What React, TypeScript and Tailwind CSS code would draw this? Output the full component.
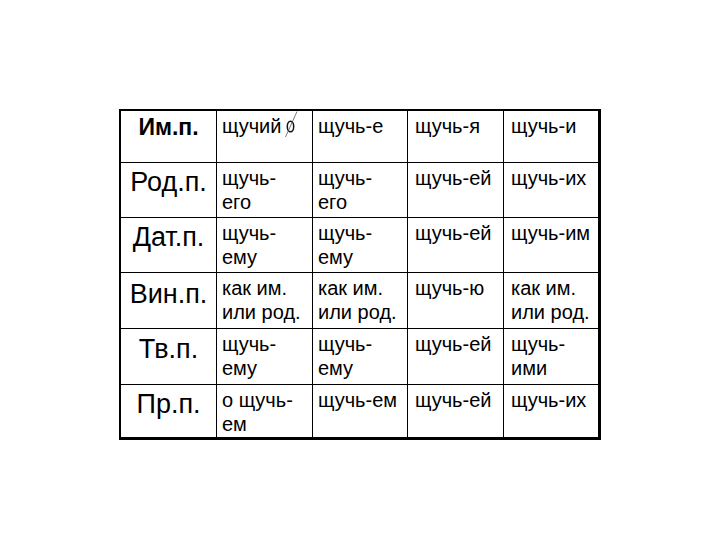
import { Fragment } from 'react'

type Cell = string | string[]

interface Row {
  head: string
  headPad: string
  cells: Cell[]
}

const rows: Row[] = [
  { head: 'Им.п.', headPad: 'pt-[3px]', cells: ['щучий', 'щучь-е', 'щучь-я', 'щучь-и'] },
  { head: 'Род.п.', headPad: 'pt-[4px]', cells: [['щучь-', 'его'], ['щучь-', 'его'], 'щучь-ей', 'щучь-их'] },
  { head: 'Дат.п.', headPad: 'pt-[4px]', cells: [['щучь-', 'ему'], ['щучь-', 'ему'], 'щучь-ей', 'щучь-им'] },
  {
    head: 'Вин.п.',
    headPad: 'pt-[6px]',
    cells: [['как им.', 'или род.'], ['как им.', 'или род.'], 'щучь-ю', ['как им.', 'или род.']],
  },
  { head: 'Тв.п.', headPad: 'pt-[5px]', cells: [['щучь-', 'ему'], ['щучь-', 'ему'], 'щучь-ей', ['щучь-', 'ими']] },
  { head: 'Пр.п.', headPad: 'pt-[4px]', cells: [['о щучь-', 'ем'], 'щучь-ем', 'щучь-ей', 'щучь-их'] },
]

// left padding differs a little per column in the original
const colPad = ['pl-[5px]', 'pl-[5px]', 'pl-[7px]', 'pl-[7px]']

function ZeroEnding() {
  // the "null ending" mark drawn after щучий
  return (
    <svg className="absolute left-[67px] top-0" width="15" height="28" viewBox="0 0 15 28">
      <ellipse cx="6.5" cy="15.5" rx="3.2" ry="5.3" fill="none" stroke="#111" strokeWidth="1.5" />
      <line x1="1.5" y1="26" x2="13" y2="0.5" stroke="#555" strokeWidth="0.8" />
    </svg>
  )
}

function BodyCell({ value, col, first }: { value: Cell; col: number; first: boolean }) {
  const lines = Array.isArray(value) ? value : [value]
  return (
    <div className={`relative bg-white pt-[3px] text-[20px] leading-[24px] text-black ${colPad[col]}`}>
      {lines.map((line, i) => (
        <div key={i} className="whitespace-nowrap">
          {line}
        </div>
      ))}
      {first && col === 0 && <ZeroEnding />}
    </div>
  )
}

export default function App() {
  return (
    <div className="min-h-[540px] w-[720px] bg-white pt-[109px] font-['Liberation_Sans',Arial,sans-serif]">
      <div className="mx-auto grid w-[482px] grid-cols-[95px_95px_94px_95px_94px] grid-rows-[51px_54px_54px_55px_55px_52px] gap-px border-t-2 border-r-[3px] border-b-[3px] border-l-2 border-black bg-black">
        {rows.map((row, r) => (
          <Fragment key={r}>
            <div
              className={`bg-white text-center text-black ${row.headPad} ${
                r === 0 ? 'text-[23px] leading-[27px] font-bold' : 'text-[27px] leading-[31px]'
              }`}
            >
              {row.head}
            </div>
            {row.cells.map((cell, c) => (
              <BodyCell key={c} value={cell} col={c} first={r === 0} />
            ))}
          </Fragment>
        ))}
      </div>
    </div>
  )
}
